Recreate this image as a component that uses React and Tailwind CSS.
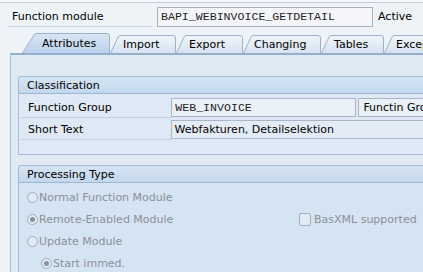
import React from 'react';

const tabs = [
  { label: 'Attributes', width: 88, pl: 20, active: true },
  { label: 'Import', width: 66, pl: 13 },
  { label: 'Export', width: 67, pl: 13 },
  { label: 'Changing', width: 78, pl: 11 },
  { label: 'Tables', width: 63, pl: 13 },
  { label: 'Exceptions', width: 70, pl: 12 },
];

const Tab = ({ label, width, pl, active }) => {
  const h = active ? 20 : 18;
  const s = active ? 13 : 9;
  const id = `tab-${label}`;
  const d = `M0.5,${h} L${s - 1},2 Q${s},0.5 ${s + 2},0.5 L${width - 3},0.5 Q${width - 0.5},0.5 ${width - 0.5},3 L${width - 0.5},${h}`;
  return (
    <div
      className={`relative shrink-0 flex items-center ${active ? 'h-[20px] z-10' : 'h-[18px]'}`}
      style={{ width, paddingLeft: pl }}
    >
      <svg className="absolute inset-0" width={width} height={h}>
        <defs>
          <linearGradient id={id} x1="0" y1="0" x2="0" y2="1">
            <stop offset="0" stopColor={active ? '#d9e6f4' : '#f1f5fa'} />
            <stop offset="1" stopColor={active ? '#bcd2eb' : '#d6e3f1'} />
          </linearGradient>
        </defs>
        <path d={d} fill={`url(#${id})`} stroke="#9bb1cc" strokeWidth="1" />
      </svg>
      <span className="relative whitespace-nowrap text-black">{label}</span>
    </div>
  );
};

const Radio = ({ checked }) => (
  <span className="w-[11px] h-[11px] rounded-full border border-[#a4acb7] bg-[#e2ebf5] flex items-center justify-center shrink-0">
    {checked && <span className="w-[5px] h-[5px] rounded-full bg-[#8b929b]" />}
  </span>
);

const GroupHeader = ({ title }) => (
  <div className="h-[17px] flex items-center pl-[8px] bg-gradient-to-b from-[#d6e4f3] to-[#c3d7ed] border-b border-[#9fb5d0] rounded-tl-[3px]">
    {title}
  </div>
);

export default function App() {
  return (
    <div className="w-[423px] h-[272px] overflow-hidden bg-[#eef3f8] text-[11px] text-black font-['DejaVu_Sans',sans-serif] leading-none">
      <div className="h-[3px] bg-[#f5f7fa] border-b border-[#c4ccd6]" />

      {/* Header */}
      <div className="flex items-center h-[27px] pl-[8px]">
        <div className="w-[145px] h-[20px] flex items-center pl-[4px] border-b border-[#cfd8e3]">Function module</div>
        <div className="ml-[4px] w-[216px] h-[20px] flex items-center pl-[3px] bg-[#f3f5f8] border border-[#a9b1bc] font-['Liberation_Mono',monospace] text-[11.6px] text-[#1e1e1e]">
          BAPI_WEBINVOICE_GETDETAIL
        </div>
        <div className="ml-[5px]">Active</div>
      </div>

      {/* Tab strip */}
      <div className="flex items-end h-[23px] pl-[22px]">
        {tabs.map((t) => (
          <Tab key={t.label} {...t} />
        ))}
      </div>

      {/* Content panel */}
      <div className="ml-[10px] h-[220px] border-l border-t-2 border-[#95add0] border-l-[#a9bcd4] bg-[#e0eaf5] pt-[21px] pl-[7px]">
        {/* Classification */}
        <div className="w-[420px] border border-r-0 border-[#a7bad3] rounded-tl-[3px] bg-[#dfe9f5] h-[79px]">
          <GroupHeader title="Classification" />
          <div className="pl-[2px] pt-[3px]">
            <div className="flex items-center h-[21px]">
              <div className="w-[151px] h-[21px] flex items-center pl-[7px] border-b border-[#c2cfdf]">Function Group</div>
              <div className="w-[186px] h-[19px] flex items-center pl-[3px] bg-[#e9f0f7] border border-[#a9b6c6] font-['Liberation_Mono',monospace] text-[11.6px] text-[#1e1e1e]">
                WEB_INVOICE
              </div>
              <div className="ml-[2px] w-[80px] h-[19px] flex items-center pl-[4px] bg-[#e9f0f7] border border-r-0 border-[#a9b6c6] whitespace-nowrap overflow-hidden">
                Functin Group
              </div>
            </div>
            <div className="flex items-center h-[21px] mt-[1px]">
              <div className="w-[151px] h-[21px] flex items-center pl-[7px] border-b border-[#c2cfdf]">Short Text</div>
              <div className="w-[270px] h-[19px] flex items-center pl-[3px] bg-[#e3ecf6] border border-r-0 border-[#a9b6c6] whitespace-nowrap">
                Webfakturen, Detailselektion
              </div>
            </div>
          </div>
        </div>

        {/* Processing Type */}
        <div className="mt-[10px] w-[420px] border border-r-0 border-b-0 border-[#a7bad3] rounded-tl-[3px] bg-[#d5e4f3] h-[120px]">
          <GroupHeader title="Processing Type" />
          <div className="text-[#8b9098] pl-[8px] pt-[3px]">
            <div className="flex items-center h-[22px]">
              <Radio />
              <span className="ml-[1px]">Normal Function Module</span>
            </div>
            <div className="flex items-center h-[22px]">
              <div className="flex items-center w-[272px]">
                <Radio checked />
                <span className="ml-[1px]">Remote-Enabled Module</span>
              </div>
              <span className="w-[12px] h-[13px] rounded-[2px] border border-[#a4acb7] bg-[#e2ebf5] shrink-0" />
              <span className="ml-[3px]">BasXML supported</span>
            </div>
            <div className="flex items-center h-[22px]">
              <Radio />
              <span className="ml-[1px]">Update Module</span>
            </div>
            <div className="flex items-center h-[22px] pl-[14px]">
              <Radio checked />
              <span className="ml-[1px]">Start immed.</span>
            </div>
          </div>
        </div>
      </div>
    </div>
  );
}
